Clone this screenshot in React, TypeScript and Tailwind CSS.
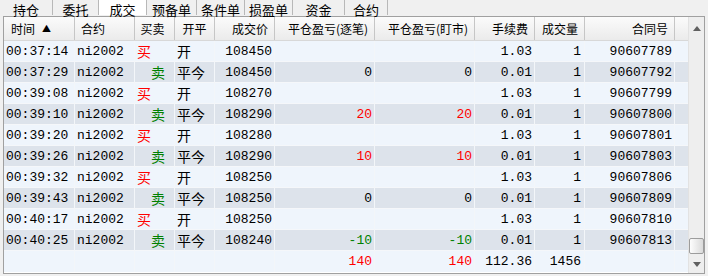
const tabs = [
  { name: "持仓", w: "w-[53px]" },
  { name: "委托", w: "w-[46px]" },
  { name: "成交", w: "w-[48px]", active: true },
  { name: "预备单", w: "w-[50px]" },
  { name: "条件单", w: "w-[48px]" },
  { name: "损盈单", w: "w-[48px]" },
  { name: "资金", w: "w-[52px]" },
  { name: "合约", w: "w-[43px]" },
];

type Trade = {
  time: string;
  buy: boolean;
  open: boolean;
  price: string;
  pnl?: string;
  fee: string;
  no: string;
};

const trades: Trade[] = [
  { time: "00:37:14", buy: true, open: true, price: "108450", fee: "1.03", no: "90607789" },
  { time: "00:37:29", buy: false, open: false, price: "108450", pnl: "0", fee: "0.01", no: "90607792" },
  { time: "00:39:08", buy: true, open: true, price: "108270", fee: "1.03", no: "90607799" },
  { time: "00:39:10", buy: false, open: false, price: "108290", pnl: "20", fee: "0.01", no: "90607800" },
  { time: "00:39:20", buy: true, open: true, price: "108280", fee: "1.03", no: "90607801" },
  { time: "00:39:26", buy: false, open: false, price: "108290", pnl: "10", fee: "0.01", no: "90607803" },
  { time: "00:39:32", buy: true, open: true, price: "108250", fee: "1.03", no: "90607806" },
  { time: "00:39:43", buy: false, open: false, price: "108250", pnl: "0", fee: "0.01", no: "90607809" },
  { time: "00:40:17", buy: true, open: true, price: "108250", fee: "1.03", no: "90607810" },
  { time: "00:40:25", buy: false, open: false, price: "108240", pnl: "-10", fee: "0.01", no: "90607813" },
];

const cols = "grid grid-cols-[71px_60px_40px_40px_60px_100px_100px_60px_50px_90px_13px]";
const cjk = "font-['Noto_Sans_CJK_SC',sans-serif] text-[14px]";

const pnlColor = (v?: string) => {
  if (!v) return "";
  if (v.startsWith("-")) return "text-[#008000]";
  if (v === "0") return "text-black";
  return "text-[#ff0000]";
};

const HeadCell = ({ children, align = "left", pad = "px-[6px]" }: { children?: React.ReactNode; align?: string; pad?: string }) => (
  <div
    className={`h-full flex items-center border-r border-[#c6c6c6] ${pad} ${
      align === "right" ? "justify-end" : align === "center" ? "justify-center" : "justify-start"
    }`}
  >
    {children}
  </div>
);

const Cell = ({ children, right, className = "" }: { children?: React.ReactNode; right?: boolean; className?: string }) => (
  <div
    className={`h-full flex items-center border-r border-[#f3f6f9] ${right ? "justify-end pr-[2px]" : "justify-start pl-[2px]"} ${className}`}
  >
    {children}
  </div>
);

export default function App() {
  return (
    <div className="w-[708px] h-[276px] bg-[#f0f0f0] flex flex-col overflow-hidden font-['Liberation_Mono','Noto_Sans_CJK_SC',monospace] text-[13px] text-black">
      {/* tabs */}
      <div className="h-[15px] flex items-end font-['Noto_Sans_CJK_SC',sans-serif] text-[13px] leading-[15px]">
        {tabs.map((t) => (
          <div
            key={t.name}
            className={`${t.w} h-full flex justify-center items-end border-r border-[#b8b8b8] ${
              t.active ? "bg-white" : "bg-[#f0f0f0]"
            }`}
          >
            <span className="translate-y-[2px]">{t.name}</span>
          </div>
        ))}
      </div>

      {/* table */}
      <div className="mt-[1px] mx-[3px] h-[258px] border border-[#a0a0a0] flex bg-white">
        <div className="w-[684px] flex flex-col">
          <div className={`${cols} h-[24px] bg-gradient-to-b from-[#fbfbfb] to-[#ebebeb] border-b border-[#d8d8d8] font-['Noto_Sans_CJK_SC',sans-serif] text-[12px]`}>
            <HeadCell pad="pl-[7px]">
              时间<span className="ml-[7px] text-[9px]">▲</span>
            </HeadCell>
            <HeadCell>合约</HeadCell>
            <HeadCell align="center" pad="pr-[4px]">买卖</HeadCell>
            <HeadCell align="center">开平</HeadCell>
            <HeadCell align="right">成交价</HeadCell>
            <HeadCell align="right">平仓盈亏(逐笔)</HeadCell>
            <HeadCell align="right">平仓盈亏(盯市)</HeadCell>
            <HeadCell align="right">手续费</HeadCell>
            <HeadCell align="right">成交量</HeadCell>
            <HeadCell align="right">合同号</HeadCell>
            <div className="h-full" />
          </div>

          {trades.map((r, i) => (
            <div
              key={r.no}
              className={`${cols} h-[21px] border-b border-[#f5f7fa] ${i % 2 === 0 ? "bg-[#eff5fc]" : "bg-[#dde3eb]"}`}
            >
              <Cell>{r.time}</Cell>
              <Cell>ni2002</Cell>
              <Cell className={`${cjk} ${r.buy ? "text-[#ff0000]" : "text-[#008000] pl-[16px]"}`}>
                {r.buy ? "买" : "卖"}
              </Cell>
              <Cell className={cjk}>{r.open ? "开" : "平今"}</Cell>
              <Cell right>{r.price}</Cell>
              <Cell right className={pnlColor(r.pnl)}>{r.pnl}</Cell>
              <Cell right className={pnlColor(r.pnl)}>{r.pnl}</Cell>
              <Cell right>{r.fee}</Cell>
              <Cell right className="pr-[3px]">1</Cell>
              <Cell right>{r.no}</Cell>
              <div className="h-full" />
            </div>
          ))}

          <div className={`${cols} h-[21px] bg-[#eff5fc]`}>
            <Cell />
            <Cell />
            <Cell />
            <Cell />
            <Cell />
            <Cell right className="text-[#ff0000]">140</Cell>
            <Cell right className="text-[#ff0000]">140</Cell>
            <Cell right>112.36</Cell>
            <Cell right className="pr-[3px]">1456</Cell>
            <Cell />
            <div className="h-full" />
          </div>
        </div>

        {/* scrollbar */}
        <div className="w-[18px] bg-[#eeeeee] border-l border-[#e2e2e2] flex flex-col items-center pt-[9px] pb-[6px]">
          <svg width="8" height="5" viewBox="0 0 8 5">
            <polygon points="4,0 8,5 0,5" fill="#606060" />
          </svg>
          <div className="flex-1" />
          <div className="w-[15px] h-[16px] mb-[8px] rounded-[2px] border border-[#9c9c9c] bg-gradient-to-r from-[#fdfdfd] to-[#dadada]" />
          <svg width="8" height="5" viewBox="0 0 8 5">
            <polygon points="0,0 8,0 4,5" fill="#606060" />
          </svg>
        </div>
      </div>
    </div>
  );
}
